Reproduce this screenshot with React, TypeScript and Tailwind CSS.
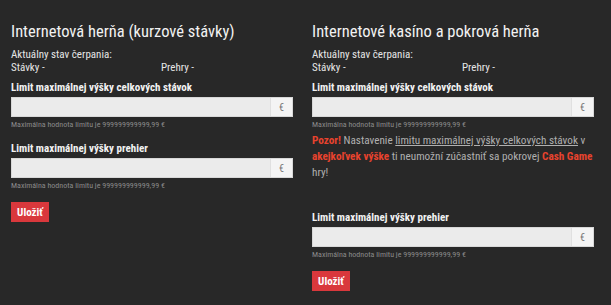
import React from "react";

function LimitField({ label }: { label: string }) {
  return (
    <div>
      <div className="text-[11px] font-bold leading-[13px] text-[#f2f2f2]">{label}</div>
      <div className="mt-[3px] flex h-[20px] bg-[#ebebeb] border border-[#d8d8d8]">
        <div className="flex-1" />
        <div className="flex w-[22px] items-center justify-center border-l border-[#e0e0e0] bg-[#f4f4f4] text-[10px] text-[#777]">
          €
        </div>
      </div>
      <div className="mt-[3px] text-[8px] leading-[10px] text-[#8a8a8a]">
        Maximálna hodnota limitu je 999999999999,99 €
      </div>
    </div>
  );
}

function Column({ title, warning }: { title: string; warning?: boolean }) {
  return (
    <div className="flex w-[282px] flex-col">
      <h2 className="mt-[22px] text-[16.5px] leading-[20px] text-[#f2f2f2]">{title}</h2>
      <div className="mt-[6px] text-[11px] leading-[13px] text-[#e6e6e6]">
        <div>Aktuálny stav čerpania:</div>
        <div className="flex">
          <span className="w-[150px]">Stávky -</span>
          <span>Prehry -</span>
        </div>
      </div>
      <div className="mt-[7px]">
        <LimitField label="Limit maximálnej výšky celkových stávok" />
      </div>
      {warning && (
        <p className="mt-[3px] mb-[30px] text-[11.2px] leading-[16px] text-[#b0b0b0]">
          <span className="font-bold text-[#e8432e]">Pozor!</span> Nastavenie{" "}
          <span className="underline">limitu maximálnej výšky celkových stávok</span> v{" "}
          <span className="font-bold text-[#e8432e]">akejkoľvek výške</span> ti neumožní zúčastniť sa
          pokrovej <span className="font-bold text-[#e8432e]">Cash Game</span> hry!
        </p>
      )}
      <div className={warning ? "" : "mt-[12px]"}>
        <LimitField label="Limit maximálnej výšky prehier" />
      </div>
      <div className="mt-[11px] flex">
        <button className="flex h-[20px] w-[38px] items-center justify-center bg-[#d9383c] text-[11px] font-bold leading-none text-white">
          Uložiť
        </button>
      </div>
    </div>
  );
}

export default function App() {
  return (
    <div className="h-[305px] w-[611px] overflow-hidden bg-[#282828] px-[11px] font-['Roboto_Condensed']">
      <div className="flex gap-[19px]">
        <Column title="Internetová herňa (kurzové stávky)" />
        <Column title="Internetové kasíno a pokrová herňa" warning />
      </div>
    </div>
  );
}
